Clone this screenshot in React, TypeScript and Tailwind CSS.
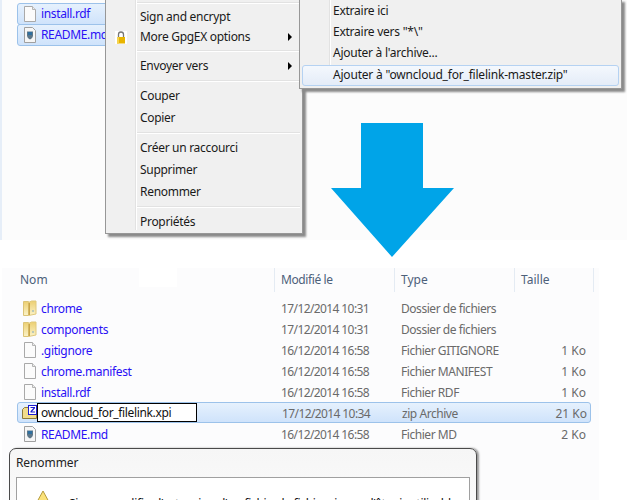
const FONT = "font-['Noto_Sans',sans-serif]";

const SELECTED = 'border border-[#9cc2ea] rounded-[3px] bg-gradient-to-b from-[#e6f1fd] to-[#cfe3fb]';

const FILES = [
  { name: 'chrome', icon: 'folder', date: '17/12/2014 10:31', type: 'Dossier de fichiers', size: '' },
  { name: 'components', icon: 'folder', date: '17/12/2014 10:31', type: 'Dossier de fichiers', size: '' },
  { name: '.gitignore', icon: 'file', date: '16/12/2014 16:58', type: 'Fichier GITIGNORE', size: '1 Ko' },
  { name: 'chrome.manifest', icon: 'file', date: '16/12/2014 16:58', type: 'Fichier MANIFEST', size: '1 Ko' },
  { name: 'install.rdf', icon: 'file', date: '16/12/2014 16:58', type: 'Fichier RDF', size: '1 Ko' },
  { name: 'owncloud_for_filelink.xpi', icon: 'zip', date: '17/12/2014 10:34', type: 'zip Archive', size: '21 Ko', renaming: true },
  { name: 'README.md', icon: 'readme', date: '16/12/2014 16:58', type: 'Fichier MD', size: '2 Ko' },
];

function FileIcon() {
  return (
    <svg width="14" height="16" viewBox="0 0 14 16" className="shrink-0">
      <path d="M1.500.5h8l3 3v12h-11z" fill="#fbfbfb" stroke="#a9a9a9" />
      <path d="M9.500.5v3h3" fill="#ececec" stroke="#b5b5b5" />
    </svg>
  );
}

function ReadmeIcon() {
  return (
    <svg width="14" height="16" viewBox="0 0 14 16" className="shrink-0">
      <path d="M1.500.5h8l3 3v12h-11z" fill="#f6f6f6" stroke="#a0a0a0" />
      <path d="M4 4.500h6v4c0 2-1.500 3-3 4-1.500-1-3-2-3-4z" fill="#5d7688" />
      <rect x="5" y="5" width="4" height="3" fill="#2f6f9f" />
    </svg>
  );
}

function FolderIcon() {
  return (
    <svg width="14" height="16" viewBox="0 0 14 16" className="shrink-0">
      <defs>
        <linearGradient id="fold" x1="0" y1="0" x2="0" y2="1">
          <stop offset="0" stopColor="#eccf72" />
          <stop offset="1" stopColor="#fbf3c8" />
        </linearGradient>
      </defs>
      <path d="M.5 1.500h5v14h-5z" fill="url(#fold)" stroke="#dcc477" />
      <path d="M5.500 2.500l3-1.500h4.500v13l-7.500 1.500z" fill="url(#fold)" stroke="#e0c97c" />
      <path d="M5.500 3h1.500v12h-1.500z" fill="#c9a548" />
      <rect x="9.500" y="10" width="1" height="2" fill="#7fa9c4" />
    </svg>
  );
}

function ZipIcon() {
  return (
    <svg width="15" height="15" viewBox="0 0 15 15" className="shrink-0">
      <path d="M.5 4.500l2-2h12v11h-14z" fill="#f1dc8c" stroke="#8d7b3c" />
      <rect x="6.500" y=".5" width="8" height="9" fill="#fff" stroke="#1c1cd0" />
      <path d="M8.500 2h4.500v1.300l-3 3.200h3v1h-4.500v-1.300l3-3.200h-3z" fill="#1c1cd0" />
    </svg>
  );
}

function LockIcon() {
  return (
    <svg width="12" height="13" viewBox="0 0 12 13">
      <rect width="12" height="13" fill="#fff" />
      <path d="M3.500 6V3.500a2.500 2.500 0 0 1 5 0V6" fill="none" stroke="#777" strokeWidth="1.300" />
      <rect x="2" y="6" width="8" height="6.500" fill="#e8b400" />
      <rect x="2" y="6" width="2" height="6.500" fill="#f5d34c" />
    </svg>
  );
}

function WarningIcon() {
  return (
    <svg width="26" height="24" viewBox="0 0 26 24">
      <path d="M13 1L25 23H1z" fill="#fbe27a" stroke="#b59a3c" />
    </svg>
  );
}

function rowIcon(icon: string) {
  if (icon === 'folder') return <FolderIcon />;
  if (icon === 'readme') return <ReadmeIcon />;
  return <FileIcon />;
}

function MenuItem({ label, h = 22, arrow, lock }: { label: string; h?: number; arrow?: boolean; lock?: boolean }) {
  return (
    <div className="flex items-center pl-[34px] pr-[10px] relative" style={{ height: h }}>
      {lock && (
        <span className="absolute left-[9px] top-[4px]">
          <LockIcon />
        </span>
      )}
      <span className="flex-1 text-[12px] text-[#1a1a1a] tracking-[-0.3px]">{label}</span>
      {arrow && <span className="w-0 h-0 border-y-[4px] border-y-transparent border-l-[4px] border-l-black" />}
    </div>
  );
}

function Separator({ my = 'my-[3px]' }: { my?: string }) {
  return <div className={`h-[2px] ml-[30px] mr-[2px] bg-[#e2e2e2] border-b border-white ${my}`} />;
}

export default function App() {
  return (
    <div className={`w-[627px] h-[500px] relative overflow-hidden bg-white flex flex-col ${FONT}`}>
      {/* top screenshot */}
      <div className="h-[240px] relative bg-[#fcfcfc] border-l-2 border-l-[#e6eef8] shrink-0">
        <div className="pl-[15px] pt-[3px] w-[120px] flex flex-col">
          <div className={`h-[22px] flex items-center pl-[5px] gap-[4px] ${SELECTED}`}>
            <FileIcon />
            <span className="text-[12px] text-[#2a10f5] tracking-[-0.35px]">install.rdf</span>
          </div>
          <div className={`h-[22px] -mt-[1px] flex items-center pl-[5px] gap-[4px] overflow-hidden ${SELECTED}`}>
            <ReadmeIcon />
            <span className="text-[12px] text-[#2a10f5] tracking-[-0.35px] whitespace-nowrap">README.md</span>
          </div>
        </div>

        {/* context menu */}
        <div className="absolute left-[103px] -top-[1px] w-[198px] h-[235px] bg-[#f0f0f0] border border-[#979797] shadow-[3px_3px_2px_#8a8a8a] pt-[2px]">
          <div className="absolute left-[29px] top-0 bottom-[3px] w-[2px] bg-[#e2e2e2] border-r border-white" />
          <Separator my="mb-[2px]" />
          <div className="pt-[1px]">
            <MenuItem label="Sign and encrypt" h={20} />
            <MenuItem label="More GpgEX options" h={20} arrow lock />
          </div>
          <Separator />
          <MenuItem label="Envoyer vers" h={22} arrow />
          <Separator />
          <MenuItem label="Couper" />
          <MenuItem label="Copier" />
          <Separator />
          <MenuItem label="Créer un raccourci" />
          <MenuItem label="Supprimer" />
          <MenuItem label="Renommer" />
          <Separator />
          <MenuItem label="Propriétés" />
        </div>

        {/* submenu */}
        <div className="absolute left-[297px] -top-[1px] w-[323px] h-[90px] bg-[#f0f0f0] border border-[#979797] shadow-[3px_3px_2px_#8a8a8a] flex flex-col justify-end pb-[2px]">
          <div className="absolute left-[29px] top-0 bottom-[2px] w-[2px] bg-[#e2e2e2] border-r border-white" />
          <div className="h-[22px] flex items-center pl-[33px] text-[12px] text-[#1a1a1a] tracking-[-0.25px]">Extraire ici</div>
          <div className="h-[22px] flex items-center pl-[33px] text-[12px] text-[#1a1a1a] tracking-[-0.25px]">Extraire vers "*\"</div>
          <div className="h-[22px] flex items-center pl-[33px] text-[12px] text-[#1a1a1a] tracking-[-0.25px]">Ajouter à l'archive...</div>
          <div className="h-[22px] mt-[1px] mx-[2px] flex items-center pl-[30px] text-[12px] text-[#1a1a1a] tracking-[-0.2px] relative rounded-[3px] border border-[#b5d2f2] bg-gradient-to-b from-[#f4f8fd] to-[#e4ecf8]">
            Ajouter à "owncloud_for_filelink-master.zip"
          </div>
        </div>
      </div>

      {/* big arrow between the two shots */}
      <svg width="125" height="136" viewBox="0 0 125 136" className="absolute left-[330px] top-[123px]">
        <path d="M31 0h62v65h31L62 134 1 65h30z" fill="#00a4e8" />
      </svg>

      {/* bottom screenshot */}
      <div className="mt-[28px] h-[232px] w-[597px] ml-[2px] bg-[#fcfcfd] relative shrink-0">
        <div className="h-[24px] flex text-[12px] text-[#4c607a]">
          <div className="w-[272px] pl-[18px] flex items-center relative">
            Nom
            <span className="absolute left-[137px] top-0 w-[38px] h-[19px] bg-white" />
          </div>
          <div className="w-[120px] pl-[6px] flex items-center border-l border-[#e4ebf3] tracking-[-0.4px]">Modifié le</div>
          <div className="w-[120px] pl-[6px] flex items-center border-l border-[#e4ebf3]">Type</div>
          <div className="w-[80px] pl-[6px] flex items-center border-x border-[#e4ebf3]">Taille</div>
        </div>

        <div className="mt-[5px] ml-[15px] w-[574px] flex flex-col">
          {FILES.map(f => (
            <div key={f.name} className={`h-[21px] flex items-center text-[12px] relative ${f.renaming ? SELECTED : ''}`}>
              <div className="w-[264px] pl-[6px] flex items-center gap-[4px]">
                {f.renaming ? <span className="-ml-[2px] flex"><ZipIcon /></span> : rowIcon(f.icon)}
                {!f.renaming && <span className="pt-[2px] text-[#2a10f5] tracking-[-0.35px]">{f.name}</span>}
              </div>
              {f.renaming && (
                <span className="absolute left-[19px] top-0 w-[160px] h-[19px] bg-white border border-black pl-[3px] pt-[1px] text-[#111] tracking-[-0.35px] flex items-center">{f.name}</span>
              )}
              <div className="w-[120px] pt-[2px] text-[#6a6a6a] tracking-[-0.6px]">{f.date}</div>
              <div className="w-[120px] pt-[2px] text-[#6a6a6a] tracking-[-0.45px]">{f.type}</div>
              <div className="w-[65px] pt-[2px] text-right text-[#6a6a6a]">{f.size}</div>
            </div>
          ))}
        </div>

        {/* rename dialog */}
        <div className="absolute left-[7px] top-[180px] w-[468px] h-[60px] border border-[#4a4a4a] rounded-t-[7px] bg-gradient-to-b from-[#f6f6f6] to-[#fafafa] shadow-[2px_0_2px_#9a9a9a] px-[6px]">
          <div className="h-[28px] flex items-center text-[12px] text-[#222] tracking-[-0.1px]">Renommer</div>
          <div className="h-[40px] bg-white border border-[#a0a0a0] relative pl-[52px] pt-[12px] overflow-hidden">
            <span className="absolute left-[13px] top-[12px]"><WarningIcon /></span>
            <span className="text-[12px] text-[#111] whitespace-nowrap tracking-[-0.28px]">Si vous modifiez l'extension d'un fichier, le fichier risque d'être inutilisable.</span>
          </div>
        </div>
      </div>
    </div>
  );
}
